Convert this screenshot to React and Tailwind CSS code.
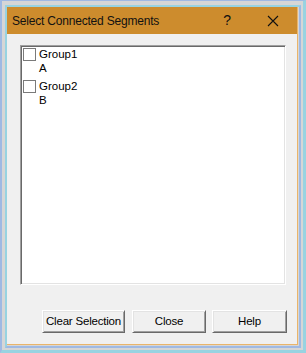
import React from "react";

const groups = [
  { name: "Group1", seg: "A" },
  { name: "Group2", seg: "B" },
];

const buttons = [
  { label: "Clear Selection", w: "w-[83px]" },
  { label: "Close", w: "w-[74px]" },
  { label: "Help", w: "w-[75px]" },
];

export default function App() {
  return (
    <div className="w-[306px] h-[353px] bg-[#d6d6d6] border-t border-l-2 border-r-[3px] border-b-[3px] border-t-[#9fb9e3] border-l-[#9fb9e3] border-r-[#98d3e1] border-b-[#98d3e1] pt-[4px] pl-[3px] pr-[2px] pb-[2px] font-['Liberation_Sans',Arial,sans-serif]">
      <div className="h-full border-2 border-t-[#98d3e1] border-l-[#98d3e1] border-r-[#9fb9e3] border-b-[#9fb9e3]">
        <div className="h-full pr-px pb-px bg-[#d6d6d6]">
          <div className="h-full flex flex-col bg-[#f0f0f0] border-r border-b border-[#e9b46a]">
            {/* title bar */}
            <div className="h-[27px] shrink-0 bg-[#cd8c2d] flex items-center pl-[5px] text-[#111] text-[12px] tracking-[-0.2px]">
              <span className="flex-1">Select Connected Segments</span>
              <span className="w-[10px] text-center text-[14px] mr-[35px]">?</span>
              <svg width="12" height="12" viewBox="0 0 12 12" className="mr-[18px]">
                <path d="M1 1L11 11M11 1L1 11" stroke="#111" strokeWidth="1.1" />
              </svg>
            </div>

            {/* list box */}
            <div className="ml-[13px] mt-[11px] w-[266px] h-[240px] bg-white border border-t-[#a0a0a0] border-l-[#a0a0a0] border-r-white border-b-white shadow-[inset_1px_1px_0_#696969,inset_-1px_-1px_0_#e3e3e3] pl-[2px] pt-[1px] flex flex-col gap-[4px] text-[11.5px] leading-[14px] text-black">
              {groups.map((g) => (
                <div key={g.name} className="flex">
                  <div className="w-[13px] h-[13px] mt-[1px] border border-[#7a7a7a] bg-white shrink-0" />
                  <div className="ml-[3px]">
                    <div>{g.name}</div>
                    <div>{g.seg}</div>
                  </div>
                </div>
              ))}
            </div>

            {/* buttons */}
            <div className="flex ml-[35px] mt-[25px] gap-[7px]">
              {buttons.map((b, i) => (
                <button
                  key={b.label}
                  className={`${b.w} ${i === 2 ? "-ml-px" : ""} h-[23px] bg-[#f0f0f0] border border-t-white border-l-white border-r-[#696969] border-b-[#696969] shadow-[inset_1px_1px_0_#e3e3e3,inset_-1px_-1px_0_#a0a0a0] text-[11.5px] tracking-[-0.2px] text-black flex items-center justify-center`}
                >
                  {b.label}
                </button>
              ))}
            </div>
          </div>
        </div>
      </div>
    </div>
  );
}
